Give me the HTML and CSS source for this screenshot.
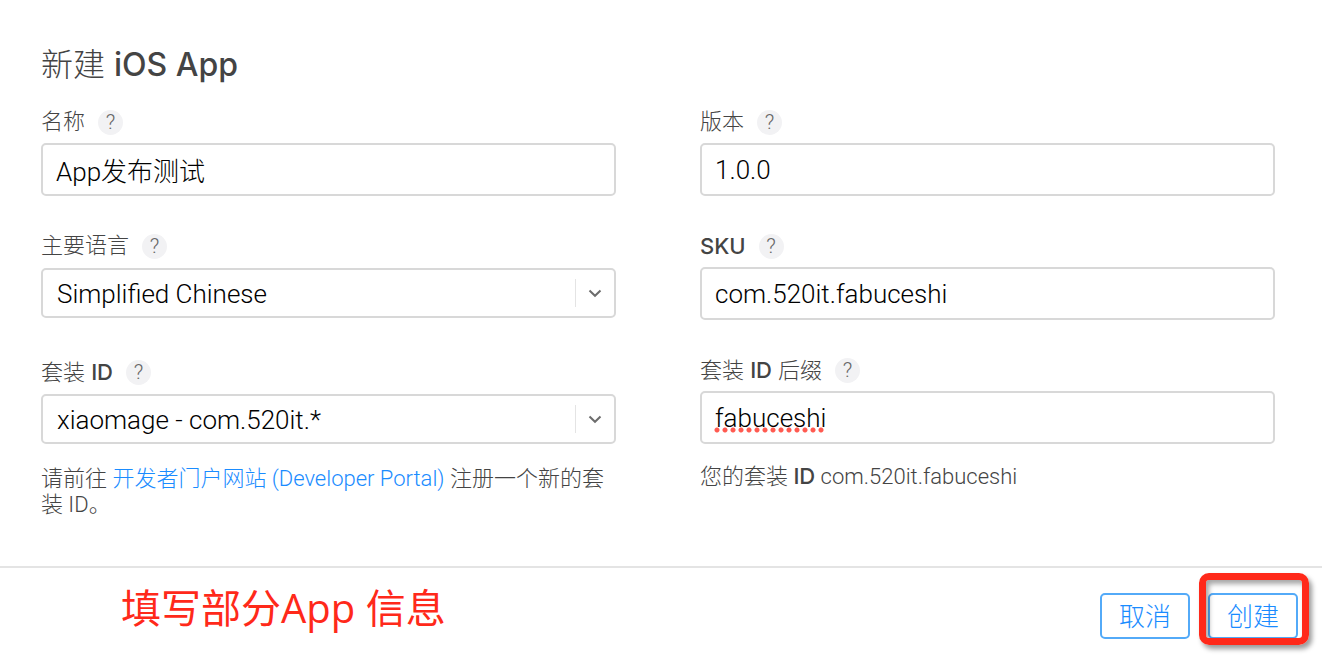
FILE: index.html
```html
<!DOCTYPE html>
<html lang="zh-CN">
<head>
<meta charset="utf-8">
<title>新建 iOS App</title>
<link rel="stylesheet" href="styles.css">
</head>
<body>
<form class="dialog">
  <main class="content">
    <h1 class="title">新建 <b>iOS App</b></h1>
    <div class="columns">
      <div class="column">
        <div class="field">
          <div class="field-head"><label for="name">名称</label><button type="button" class="help">?</button></div>
          <input class="control" id="name" type="text" value="App发布测试">
        </div>
        <div class="field">
          <div class="field-head"><label for="language">主要语言</label><button type="button" class="help">?</button></div>
          <div class="select-wrap">
            <select class="control select" id="language"><option>Simplified Chinese</option></select>
            <span class="arrow"><svg width="14" height="10" viewBox="0 0 14 10"><path d="M1.5 2.500 7 7.800 12.500 2.500" fill="none" stroke="#6c6c6c" stroke-width="2"/></svg></span>
          </div>
        </div>
        <div class="field">
          <div class="field-head"><label for="bundle">套装 <b>ID</b></label><button type="button" class="help">?</button></div>
          <div class="select-wrap">
            <select class="control select" id="bundle"><option>xiaomage - com.520it.*</option></select>
            <span class="arrow"><svg width="14" height="10" viewBox="0 0 14 10"><path d="M1.5 2.500 7 7.800 12.500 2.500" fill="none" stroke="#6c6c6c" stroke-width="2"/></svg></span>
          </div>
        </div>
        <p class="note">请前往 <a href="#">开发者门户网站 (Developer Portal)</a> 注册一个新的套装 ID。</p>
      </div>
      <div class="column">
        <div class="field">
          <div class="field-head"><label for="version">版本</label><button type="button" class="help">?</button></div>
          <input class="control" id="version" type="text" value="1.0.0">
        </div>
        <div class="field">
          <div class="field-head"><label for="sku"><b>SKU</b></label><button type="button" class="help">?</button></div>
          <input class="control" id="sku" type="text" value="com.520it.fabuceshi">
        </div>
        <div class="field">
          <div class="field-head"><label for="suffix">套装 <b>ID</b> 后缀</label><button type="button" class="help">?</button></div>
          <div class="spell-wrap">
            <input class="control" id="suffix" type="text" value="fabuceshi" spellcheck="false">
            <span class="spell-dots"></span>
          </div>
        </div>
        <p class="note">您的套装 <b>ID</b> com.520it.fabuceshi</p>
      </div>
    </div>
  </main>
  <footer class="footer">
    <p class="caption">填写部分App 信息</p>
    <div class="actions">
      <button type="button" class="button">取消</button>
      <button type="submit" class="button marked">创建</button>
    </div>
  </footer>
</form>
</body>
</html>
```
FILE: styles.css
```css
* { box-sizing: border-box; }

body {
  margin: 0;
  background: #fff;
  color: #444;
  font-family: "Liberation Sans", "Noto Sans CJK SC", sans-serif;
  font-weight: 300;
}

.dialog {
  display: flex;
  flex-direction: column;
  min-height: 100vh;
}

.content {
  flex: 1;
  padding: 41px 47px 0 41px;
}

.title {
  margin: 0 0 14px;
  font: 300 32px/48px Inter, "Noto Sans CJK SC", sans-serif;
}

.title b, .field-head b, .note b { font-weight: 500; font-family: Inter, sans-serif; }

.columns {
  display: grid;
  grid-template-columns: 1fr 1fr;
  gap: 84px;
}

.field { margin-bottom: 31px; }

.column .field:last-of-type { margin-bottom: 19px; }

.field-head {
  display: flex;
  align-items: center;
  gap: 13px;
  height: 38px;
  margin-bottom: 2px;
  font-size: 22px;
  line-height: 32px;
}

.help {
  width: 25px;
  height: 25px;
  padding: 0;
  border: 0;
  border-radius: 50%;
  background: #f2f2f4;
  color: #666;
  font: 300 21px/25px Roboto, sans-serif;
}

.control {
  display: block;
  width: 100%;
  height: 53px;
  padding: 0 13px;
  border: 2px solid #d8d8d8;
  border-radius: 5px;
  background: #fff;
  color: #000;
  font: 300 26px/36px Roboto, "Noto Sans CJK SC", sans-serif;
}

.select-wrap {
  position: relative;
  padding: 1px 0 4px;
}

.column .field:last-of-type .select-wrap { padding-bottom: 3px; }

.select {
  height: 50px;
  padding: 2px 14px 0;
  appearance: none;
}

.arrow {
  position: absolute;
  top: 12px;
  right: 2px;
  display: flex;
  align-items: center;
  justify-content: center;
  width: 39px;
  height: 28px;
  border-left: 1px solid #e4e4e4;
  pointer-events: none;
}

.spell-wrap { position: relative; }

.spell-dots {
  position: absolute;
  left: 14px;
  top: 36px;
  width: 112px;
  height: 6px;
  background: radial-gradient(circle at 3px 3px, #ff5a50 2px, transparent 3px) 0 0 / 8px 6px;
}

.note {
  margin: 0;
  font: 300 22px/26px Roboto, "Noto Sans CJK SC", sans-serif;
}

.note a { color: #1a8cff; text-decoration: none; }

.footer {
  display: flex;
  align-items: flex-start;
  justify-content: space-between;
  height: 94px;
  padding: 12px 24px 0 121px;
  border-top: 2px solid #e4e4e4;
}

.caption {
  margin: 0;
  color: #ff291a;
  font: 400 40px/56px "Open Sans", "Noto Sans CJK SC", sans-serif;
}

.actions {
  display: flex;
  gap: 18px;
  padding-top: 13px;
}

.button {
  position: relative;
  width: 90px;
  height: 46px;
  padding: 0 0 3px;
  border: 2px solid #53aaf8;
  border-radius: 5px;
  background: #fff;
  color: #1a8cff;
  font: 300 26px/36px "Noto Sans CJK SC", sans-serif;
}

.marked::after {
  content: "";
  position: absolute;
  inset: -22px -13px -8px -11px;
  border: 7px solid #ff291a;
  border-radius: 10px;
  box-shadow: 3px 4px 5px rgba(0, 0, 0, .4), inset 3px 4px 5px rgba(0, 0, 0, .35);
}
```
